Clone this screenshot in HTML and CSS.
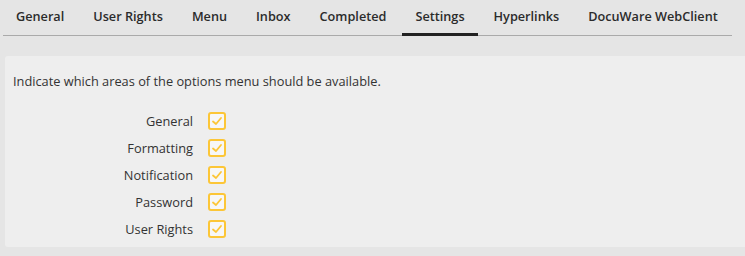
FILE: index.html
```html
<!DOCTYPE html>
<html>
<head>
<meta charset="utf-8">
<link rel="stylesheet" href="styles.css">
</head>
<body>
<nav class="tabs">
  <div class="tab">General</div>
  <div class="tab">User Rights</div>
  <div class="tab">Menu</div>
  <div class="tab">Inbox</div>
  <div class="tab">Completed</div>
  <div class="tab active">Settings</div>
  <div class="tab">Hyperlinks</div>
  <div class="tab">DocuWare WebClient</div>
</nav>
<section class="panel">
  <p class="intro">Indicate which areas of the options menu should be available.</p>
  <div class="options">
    <span class="label">General</span>
    <span class="check"><svg viewBox="0 0 14 14" width="14" height="14"><polyline points="3,7.5 6,10 11,4"/></svg></span>
    <span class="label">Formatting</span>
    <span class="check"><svg viewBox="0 0 14 14" width="14" height="14"><polyline points="3,7.5 6,10 11,4"/></svg></span>
    <span class="label">Notification</span>
    <span class="check"><svg viewBox="0 0 14 14" width="14" height="14"><polyline points="3,7.5 6,10 11,4"/></svg></span>
    <span class="label">Password</span>
    <span class="check"><svg viewBox="0 0 14 14" width="14" height="14"><polyline points="3,7.5 6,10 11,4"/></svg></span>
    <span class="label">User Rights</span>
    <span class="check"><svg viewBox="0 0 14 14" width="14" height="14"><polyline points="3,7.5 6,10 11,4"/></svg></span>
  </div>
</section>
</body>
</html>
```
FILE: styles.css
```css
html, body {
  margin: 0;
  padding: 0;
  background: #e5e5e5;
  font-family: "Open Sans", "Liberation Sans", sans-serif;
  font-size: 12.8px;
  color: #333;
}
.tabs {
  display: flex;
  gap: 3px;
  margin: 0 13px 0 3px;
  height: 35px;
  border-bottom: 1px solid #aaaaaa;
}
.tab {
  padding: 0 13px;
  font-size: 12.7px;
  font-weight: 600;
  color: #2b2b2b;
  line-height: 33px;
  height: 33px;
  white-space: nowrap;
  flex: none;
}
.tab.active {
  border-bottom: 3px solid #222;
}
.panel {
  margin: 20px 0 0 5px;
  height: 191px;
  box-sizing: border-box;
  background: #eeeeee;
  border-radius: 3px 0 0 3px;
  padding: 12px 8px 0 8px;
}
.intro {
  margin: 0;
  line-height: 26px;
}
.options {
  display: grid;
  grid-template-columns: 180px auto;
  column-gap: 15px;
  grid-auto-rows: 27px;
  align-items: center;
  justify-content: start;
  margin-top: 13px;
}
.label {
  text-align: right;
}
.check {
  width: 18px;
  height: 18px;
  box-sizing: border-box;
  border: 2px solid #fcc637;
  border-radius: 3px;
  display: flex;
  align-items: center;
  justify-content: center;
  background: #f7f7f7;
}
.check svg polyline {
  fill: none;
  stroke: #fcc637;
  stroke-width: 1.8;
  stroke-linecap: round;
  stroke-linejoin: round;
}
```
